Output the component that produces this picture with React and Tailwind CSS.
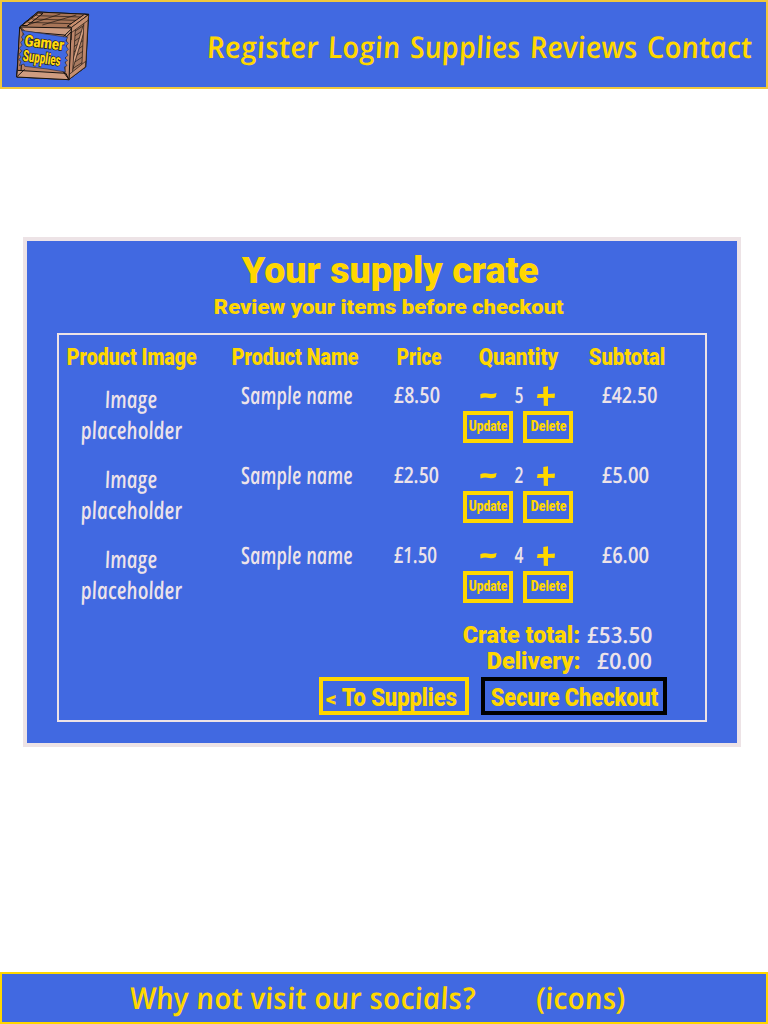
import { useLayoutEffect, useRef } from 'react';

// Squeezes or stretches a line of text so that it fills the width of its box.
function Fit({ className = '', display = false, children }) {
  const box = useRef(null);
  const text = useRef(null);
  useLayoutEffect(() => {
    const ratio = (box.current.clientWidth - 1.4) / text.current.offsetWidth;
    text.current.style.transform = display
      ? `translateX(0.8px) scaleX(${ratio})`
      : `translateX(0.8px) scaleX(${ratio}) skewX(9deg)`;
  }, [children, display]);
  return (
    <span
      ref={box}
      className={`block shrink-0 whitespace-nowrap ${
        display
          ? "font-['Roboto',sans-serif] font-black"
          : "font-['Open_Sans',sans-serif] font-semibold italic"
      } ${className}`}
    >
      <span ref={text} className={display ? 'inline-block origin-left' : 'inline-block origin-[0_60%]'}>
        {children}
      </span>
    </span>
  );
}

function Logo() {
  return (
    <svg viewBox="45 27 231 219" className="h-[73px] w-[77px]" role="img" aria-label="Gamer Supplies">
      <g stroke="#17120f" strokeWidth="3" strokeLinejoin="round">
        <path d="M63 80L116 36L269 43L217 82L211 239L53 231Z" fill="#b98266" />
        <path d="M64 79L117 36L268 43L217 83L198 98L64 88Z" fill="#a87558" />
        <path d="M69 76L119 39L132 40L84 77ZM205 79L256 43L268 44L221 83Z" fill="#c98e6d" />
        <path d="M112 47L245 51M98 57L231 61M86 67L217 71M91 73L184 42M130 75L232 45" fill="none" strokeWidth="2" />
        <path d="M217 83L269 44L260 201L209 239Z" fill="#a87a60" />
        <path d="M220 99L264 70M219 113L263 84M218 129L262 99M217 145L261 116M216 161L260 132M216 177L259 149M215 194L258 166M214 210L257 183" fill="none" strokeWidth="2" />
        <path d="M218 190L252 78L262 73L220 211Z" fill="#d8a283" strokeWidth="2" />
        <path d="M217 84L230 76L220 229L209 238ZM255 57L268 46L260 201L248 209Z" fill="#bd866a" strokeWidth="2" />
        <path d="M218 82L269 44L267 61L217 98ZM211 223L260 184L259 201L209 239Z" fill="#c58f71" strokeWidth="2" />
        <path d="M63 81L217 84L216 120L196 105L67 94Z" fill="#ce9c80" />
        <path d="M62 82L73 94L66 214L54 230Z" fill="#b77e61" />
        <path d="M202 111L216 96L210 238L197 219Z" fill="#c18b6e" />
        <path d="M55 211L201 220L209 239L53 231Z" fill="#cf9c80" />
        <path d="M63 80L82 98M216 88L193 110M55 229L77 208M208 236L191 213" fill="none" strokeWidth="3" />
      </g>
      <path d="M67 91L206 112L201 122L208 130L201 138L208 148L201 156L207 166L198 174L206 181L198 187L204 197L196 201L199 216L145 207L77 199L75 192L61 197L66 184L59 179L66 171L60 163L68 153L61 145L69 136L65 127L72 119L67 111L75 103Z" fill="#4169e1" stroke="#332e35" strokeWidth="2" />
      <g fontFamily="Roboto, sans-serif" fontWeight="900" fill="#ffd90d" stroke="#17120f" strokeWidth="4" paintOrder="stroke">
        <text transform="translate(75 137) rotate(7)" fontSize="47" textLength="119" lengthAdjust="spacingAndGlyphs">Gamer</text>
        <text transform="translate(70 182) rotate(8)" fontSize="47" textLength="114" lengthAdjust="spacingAndGlyphs">Supplies</text>
      </g>
    </svg>
  );
}

const rows = [
  { price: '£8.50', priceW: 'w-[48px]', qty: 5, sub: '£42.50', subW: 'w-[57px]' },
  { price: '£2.50', priceW: 'w-[47px]', qty: 2, sub: '£5.00', subW: 'w-[49px]' },
  { price: '£1.50', priceW: 'w-[45px]', qty: 4, sub: '£6.00', subW: 'w-[49px]' },
];

const columns = 'grid grid-cols-[166px_154px_84px_120px_120px]';

function CrateRow({ item }) {
  return (
    <div className={`${columns} h-20 text-[#ede3e9]`}>
      <div className="flex flex-col items-center pt-[8px] pr-[22px] text-[24px] leading-[31px]">
        <Fit className="w-[54px]">Image</Fit>
        <Fit className="w-[103px]">placeholder</Fit>
      </div>
      <div className="pt-[4px] pl-[15px] text-[24px] leading-[31px]">
        <Fit className="w-[113px]">Sample name</Fit>
      </div>
      <div className="pt-[4px] pl-[14px] text-[22.5px] leading-[32px]">
        <Fit className={item.priceW}>{item.price}</Fit>
      </div>
      <div>
        <div className="flex h-9 items-start pt-[4px] pl-[17px] text-[22.5px] leading-[32px] text-[#ede3e9]">
          <svg viewBox="0 0 17 20" className="mt-[8px] h-5 w-[17px]">
            <path d="M.3 7.2C4 5.4 7 7 11 7Q13 7 16.6 6L15.8 10Q13 12 9 11Q5 10 .5 11.4Z" fill="gold" />
          </svg>
          <Fit className="ml-[17px] w-[10px]">{item.qty}</Fit>
          <svg viewBox="0 0 18 20" className="mt-[7px] ml-[13px] h-5 w-[18px]">
            <path d="M6.3 1L11 .3V8L18 7.5L17.6 12L11 11.7V20L6.7 19.7V11.8L0 12L.6 8L6.3 8.1Z" fill="gold" />
          </svg>
        </div>
        <div className="flex gap-[10px] text-[15.5px] leading-[22px] text-[gold]">
          <button className="flex h-8 w-[50px] justify-center border-4 border-[gold]">
            <Fit display className="w-[40px]">Update</Fit>
          </button>
          <button className="flex h-8 w-[50px] justify-center border-4 border-[gold]">
            <Fit display className="w-[37px]">Delete</Fit>
          </button>
        </div>
      </div>
      <div className="pt-[4px] pl-[18px] text-[22.5px] leading-[32px]">
        <Fit className={item.subW}>{item.sub}</Fit>
      </div>
    </div>
  );
}

export default function App() {
  return (
    <div className="flex h-screen w-[768px] flex-col overflow-hidden bg-white text-[gold]">
      <header className="flex h-[89px] shrink-0 justify-between border-2 border-[#f0c83c] bg-[#4169e1] pt-[7px] pr-[13px] pl-[12px]">
        <Logo />
        <nav className="flex gap-[8px] pt-[18px] text-[30px] leading-[40px]">
          <Fit className="w-[113px]">Register</Fit>
          <Fit className="w-[74px]">Login</Fit>
          <Fit className="w-[112px]">Supplies</Fit>
          <Fit className="w-[109px]">Reviews</Fit>
          <Fit className="w-[107px]">Contact</Fit>
        </nav>
      </header>

      <main className="mt-[148px] ml-[23px] h-[510px] w-[718px] shrink-0 border-4 border-[#ede3e6] bg-[#4169e1]">
        <h1 className="ml-[214px] h-[53px] pt-[6px] text-[36px] leading-[48px]">
          <Fit display className="w-[298px]">Your supply crate</Fit>
        </h1>
        <h2 className="ml-[186px] text-[21px] leading-[26px]">
          <Fit display className="w-[351px]">Review your items before checkout</Fit>
        </h2>
        <section className="mt-[13px] ml-[30px] h-[389px] w-[650px] border-2 border-[#ede3e6]">
          <div className="mt-[6px] flex h-[34px] pl-[7px] text-[24.5px] leading-[32px]">
            <Fit display className="w-[131px]">Product Image</Fit>
            <Fit display className="ml-[34px] w-[128px]">Product Name</Fit>
            <Fit display className="ml-[37px] w-[46px]">Price</Fit>
            <Fit display className="ml-[36px] w-[81px]">Quantity</Fit>
            <Fit display className="ml-[29px] w-[78px]">Subtotal</Fit>
          </div>
          {rows.map((item) => (
            <CrateRow key={item.qty} item={item} />
          ))}
          <div className="mt-[7px] ml-[402px] flex h-[26px] w-[192px] items-center justify-end gap-[5px] text-[24px] leading-[26px]">
            <Fit display className="w-[119px]">Crate total:</Fit>
            <Fit className="w-[67px] text-[22.5px]/[24px] text-[#ede3e9]">£53.50</Fit>
          </div>
          <div className="ml-[402px] flex h-[26px] w-[192px] items-center justify-end gap-[15px] text-[24px] leading-[26px]">
            <Fit display className="w-[95px]">Delivery:</Fit>
            <Fit className="w-[57px] text-[22.5px]/[24px] text-[#ede3e9]">£0.00</Fit>
          </div>
          <div className="mt-[3px] ml-[260px] flex gap-[12px] text-[26.5px] leading-[32px]">
            <button className="flex h-[38px] w-[150px] border-4 border-[gold] pl-[1px]">
              <Fit display className="w-[12px] text-[20px] leading-[36px]">&lt;</Fit>
              <Fit display className="ml-[5px] w-[117px]">To Supplies</Fit>
            </button>
            <button className="flex h-[38px] w-[186px] border-4 border-black pl-[5px]">
              <Fit display className="w-[169px]">Secure Checkout</Fit>
            </button>
          </div>
        </section>
      </main>

      <footer className="mt-auto flex h-[52px] shrink-0 border-2 border-[gold] bg-[#4169e1] pt-[3px] pl-[127px] text-[30px] leading-[42px]">
        <Fit className="w-[347px]">Why not visit our socials?</Fit>
        <Fit className="ml-[59px] w-[92px]">(icons)</Fit>
      </footer>
    </div>
  );
}
